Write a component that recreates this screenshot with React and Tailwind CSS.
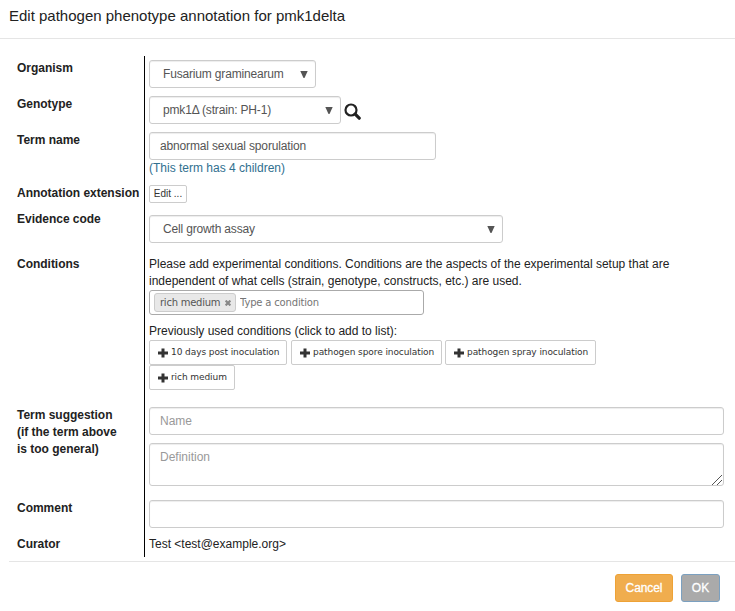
import React from "react";

const field =
  "block rounded-[3px] border border-[#ccc] bg-white text-[12px] leading-[17px] text-[#555] shadow-[inset_0_1px_1px_rgba(0,0,0,0.075)] outline-none placeholder:text-[#999]";

function Row({ label, height, children }) {
  return (
    <div className={`flex ${height}`}>
      <div className="w-[144px] shrink-0 whitespace-nowrap pl-[17px] pt-1 font-bold leading-[17px] tracking-[-0.02px]">{label}</div>
      <div className="min-w-0 flex-1 border-l border-black pl-1">{children}</div>
    </div>
  );
}

function Select({ width, children }) {
  return (
    <button className={`flex h-7 items-center justify-between pl-[13px] pr-[7px] tracking-[-0.17px] ${field} ${width}`}>
      <span>{children}</span>
      <svg className="h-[7px] w-[8px]" viewBox="0 0 8 7" fill="#555">
        <path d="M.3 0h7.4L4.5 7h-1z" />
      </svg>
    </button>
  );
}

function Condition({ width, children }) {
  return (
    <button className={`flex h-[25px] items-center rounded-[2px] border border-[#ccc] bg-white pl-[8px] font-['DejaVu_Sans',sans-serif] text-[9px] tracking-[-0.08px] text-[#333] ${width}`}>
      <svg className="mr-[3px] h-[10px] w-[10px] shrink-0" viewBox="0 0 10 10" fill="#333">
        <path d="M3.5.5h3v3H10v3H6.5v3h-3v-3H0v-3h3.5z" />
      </svg>
      <span className="whitespace-nowrap">{children}</span>
    </button>
  );
}

export default function App() {
  return (
    <div className="h-[611px] w-[735px] overflow-hidden bg-white font-['Liberation_Sans',Arial,sans-serif] text-[12px] leading-[17px] text-[#222]">
      <header className="h-[39px] border-b border-[#e5e5e5] pl-[9px] pt-[6px]">
        <h1 className="text-[15px] leading-5">Edit pathogen phenotype annotation for pmk1delta</h1>
      </header>
      <main className="pt-[17px]">
        <Row label="Organism" height="h-9">
          <div className="pt-1"><Select width="w-[167px]">Fusarium graminearum</Select></div>
        </Row>
        <Row label="Genotype" height="h-9">
          <div className="flex items-center pt-1">
            <Select width="w-[192px]">pmk1Δ (strain: PH-1)</Select>
            <svg className="ml-[3px] mt-[3px] h-[17px] w-[17px]" viewBox="0 0 17 17" fill="none" stroke="#222">
              <circle cx="7" cy="7" r="5.5" strokeWidth="2.2" />
              <path d="m11.2 11.2 4 4" strokeWidth="3.2" strokeLinecap="round" />
            </svg>
          </div>
        </Row>
        <Row label="Term name" height="h-[53px]">
          <div className="pt-1">
            <input className={`h-7 w-[287px] px-[10px] tracking-[-0.15px] ${field}`} defaultValue="abnormal sexual sporulation" />
            <a className="block text-[#31708f]">(This term has 4 children)</a>
          </div>
        </Row>
        <Row label="Annotation extension" height="h-[26px]">
          <div className="pt-1">
            <button className="block h-[18px] w-[38px] rounded-[2px] border border-[#ccc] text-[10px] leading-4 text-[#333]">Edit ...</button>
          </div>
        </Row>
        <Row label="Evidence code" height="h-[45px]">
          <div className="pt-2"><Select width="w-[354px]">Cell growth assay</Select></div>
        </Row>
        <Row label="Conditions" height="h-[151px]">
          <div className="pt-1">
            <p>
              Please add experimental conditions. Conditions are the aspects of the experimental setup that are<br />
              independent of what cells (strain, genotype, constructs, etc.) are used.
            </p>
            <div className="flex h-[25px] w-[275px] items-center rounded-[3px] border border-[#aaa] pl-1 font-['DejaVu_Sans',sans-serif] text-[10px]">
              <span className="flex h-[19px] w-[82px] items-center rounded-[3px] border border-[#ccc] bg-[#e8e8e8] pl-[5px] text-[#555]">
                <span className="whitespace-nowrap tracking-[-0.25px]">rich medium</span>
                <svg className="ml-[5px] h-[6px] w-[6px] shrink-0" viewBox="0 0 6 6" stroke="#888" strokeWidth="2.2">
                  <path d="m.6.6 4.8 4.8M5.4.6.6 5.4" />
                </svg>
              </span>
              <input className="ml-1 w-[170px] bg-transparent tracking-[-0.17px] outline-none placeholder:text-[#757575]" placeholder="Type a condition" />
            </div>
            <p className="mt-2">Previously used conditions (click to add to list):</p>
            <div className="flex w-[500px] flex-wrap gap-x-1">
              <Condition width="w-[138px]">10 days post inoculation</Condition>
              <Condition width="w-[151px]">pathogen spore inoculation</Condition>
              <Condition width="w-[151px] -ml-px">pathogen spray inoculation</Condition>
              <Condition width="w-[86px]">rich medium</Condition>
            </div>
          </div>
        </Row>
        <Row label={<>Term suggestion<br />(if the term above<br />is too general)</>} height="h-[93px]">
          <div className="pt-1">
            <input className={`h-7 w-[575px] px-[10px] ${field}`} placeholder="Name" />
            <div className="relative mt-2 w-[575px]">
              <textarea className={`h-[43px] w-[575px] resize-none px-[10px] py-[5px] ${field}`} placeholder="Definition" />
              <svg className="absolute bottom-px right-[2px] h-[10px] w-[10px]" viewBox="0 0 10 10" stroke="#555" fill="none">
                <path d="M0 10 10 0M5 10l5-5" />
              </svg>
            </div>
          </div>
        </Row>
        <Row label="Comment" height="h-9">
          <div className="pt-1"><input className={`h-7 w-[575px] px-[10px] ${field}`} /></div>
        </Row>
        <Row label="Curator" height="h-[25px]">
          <p className="pt-1">Test &lt;test@example.org&gt;</p>
        </Row>
      </main>
      <footer className="ml-[9px] mt-1 flex justify-end gap-2 border-t border-[#e5e5e5] pr-[15px] pt-3 text-[12px] text-white">
        <button className="h-7 w-[58px] rounded-[3px] border border-[#eea236] bg-[#f0ad4e] tracking-[-0.1px] [-webkit-text-stroke:0.3px_white]">Cancel</button>
        <button className="h-7 w-[39px] rounded-[3px] border border-[#7ba0c0] bg-[#aaa] [-webkit-text-stroke:0.3px_white]">OK</button>
      </footer>
    </div>
  );
}
